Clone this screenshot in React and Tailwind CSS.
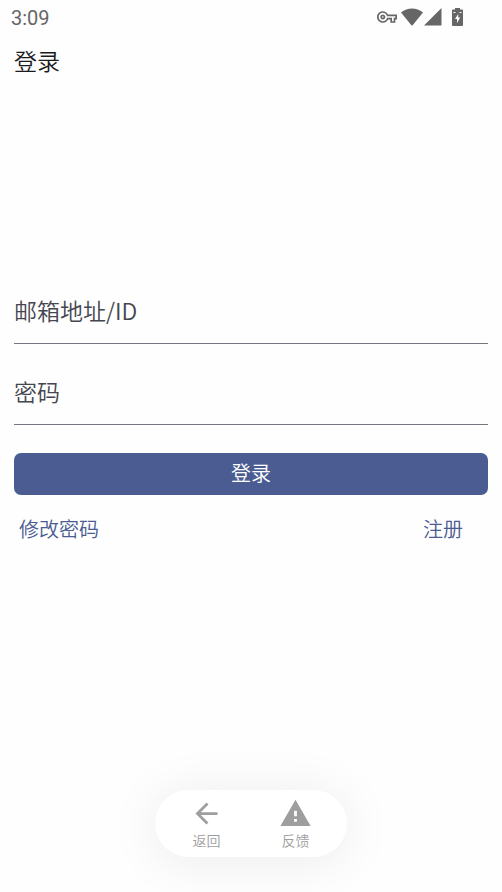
import React, { useState } from "react";
import { MdArrowBack, MdOutlineVpnKey, MdWarning } from "react-icons/md";

const fields = [
  { id: "account", label: "邮箱地址/ID", type: "text", autoComplete: "username" },
  { id: "password", label: "密码", type: "password", autoComplete: "current-password" },
];

const actions = [
  { label: "返回", icon: MdArrowBack },
  { label: "反馈", icon: MdWarning },
];

function StatusBar() {
  return (
    <header className="flex h-[35px] items-center justify-between pl-[11px] pr-[39px] text-[#666666]">
      <span className="font-[Roboto,sans-serif] text-xl font-normal">3:09</span>
      <div className="flex items-center pb-0.5">
        <MdOutlineVpnKey className="mr-1 size-5" />
        <svg className="mr-px h-[18px] w-[22px]" viewBox="0 0 22 18" fill="currentColor">
          <path d="M0 4.5C6.5-1 15.500-1 22 4.500L11.800 17Q11 18 10.200 17Z" />
        </svg>
        <svg className="mr-2.5 size-[18px]" viewBox="0 0 18 18" fill="currentColor">
          <path d="M17.500 0V17.500H0Z" />
        </svg>
        <svg className="h-[18px] w-[11px]" viewBox="0 0 11 18" fill="currentColor">
          <path
            fillRule="evenodd"
            d="M3 0h5v1.500H10Q11 1.500 11 2.500V17Q11 18 10 18H1Q0 18 0 17V2.500Q0 1.500 1 1.500H3ZM6.200 6L3 11h2v4L8.200 9.500H6.200ZM1.500 4v1h2V4ZM7.500 4v1h2V4Z"
          />
        </svg>
      </div>
    </header>
  );
}

export default function App() {
  const [values, setValues] = useState({ account: "", password: "" });

  return (
    <div className="flex min-h-screen flex-col bg-[#fefefe] font-['Noto_Sans_CJK_SC','Noto_Sans',sans-serif] font-[350]">
      <StatusBar />

      <main className="px-3.5">
        <h1 className="flex h-[50px] items-center text-[23px] font-[350] text-[#1b1b1f]">登录</h1>

        {/* Login form */}
        <form className="mt-48" onSubmit={(e) => e.preventDefault()}>
          {fields.map((field) => (
            <div key={field.id} className="relative mb-3.5">
              <input
                id={field.id}
                type={field.type}
                autoComplete={field.autoComplete}
                placeholder=" "
                value={values[field.id]}
                onChange={(e) => setValues({ ...values, [field.id]: e.target.value })}
                className="peer block h-[67px] w-full border-b border-[#767680] text-[23px] text-[#1b1b1f] outline-none"
              />
              {/* Label sits in the field until something is typed */}
              <label
                htmlFor={field.id}
                className="absolute inset-x-0 top-0 flex h-[66px] items-center text-[23px] text-[#45464f] peer-[:not(:placeholder-shown)]:hidden"
              >
                {field.label}
              </label>
            </div>
          ))}
          <button type="submit" className="mt-3.5 h-[42px] w-full rounded-[7px] bg-[#4a5c92] pb-0.5 text-xl text-white">
            登录
          </button>
        </form>

        <div className="mt-5 flex justify-between pl-[5px] pr-[25px] text-xl text-[#4a5c92]">
          <a href="#reset">修改密码</a>
          <a href="#register">注册</a>
        </div>
      </main>

      {/* Floating action bar */}
      <nav className="mx-auto mb-[35px] mt-auto flex h-[67px] w-48 items-center justify-center gap-[61px] rounded-full bg-white shadow-[0_4px_52px_rgba(0,0,0,0.08)]">
        {actions.map(({ label, icon: Icon }) => (
          <button key={label} className="flex w-7 flex-col items-center text-sm text-[#9e9e9e]">
            <Icon className="size-[33px] shrink-0" />
            {label}
          </button>
        ))}
      </nav>
    </div>
  );
}
